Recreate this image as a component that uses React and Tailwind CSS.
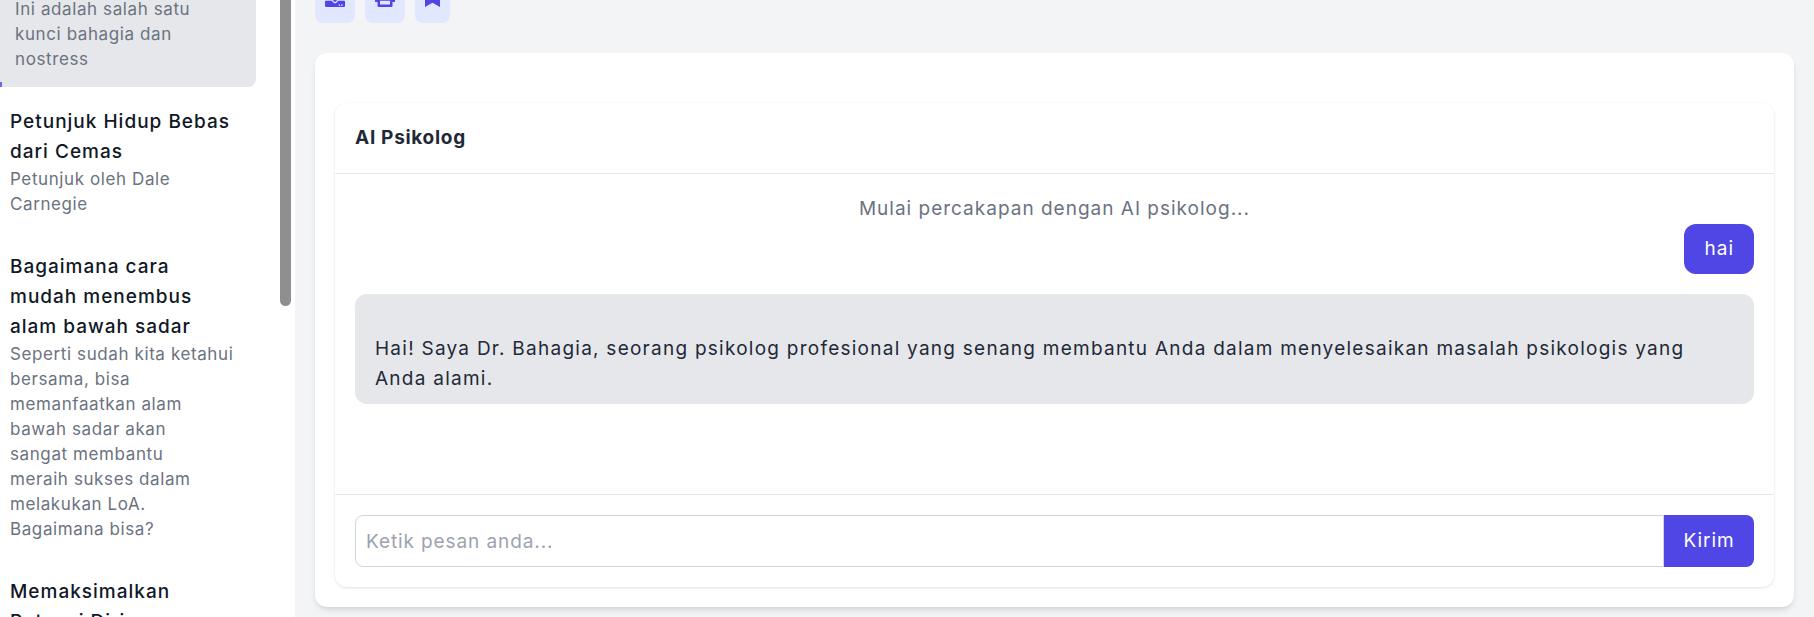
import React from "react";
import { FaDownload, FaPrint, FaBookmark } from "react-icons/fa";

const articles = [
  {
    title: "Petunjuk Hidup Bebas dari Cemas",
    desc: "Petunjuk oleh Dale Carnegie",
  },
  {
    title: "Bagaimana cara mudah menembus alam bawah sadar",
    desc: "Seperti sudah kita ketahui bersama, bisa memanfaatkan alam bawah sadar akan\nsangat membantu\nmeraih sukses dalam\nmelakukan LoA. Bagaimana bisa?",
  },
  {
    title: "Memaksimalkan Potensi Diri",
    desc: "",
  },
];

const App = () => {
  return (
    <div className="flex h-[617px] overflow-hidden bg-[#f3f4f6] [font-family:Inter,sans-serif]">
      {/* Sidebar */}
      <aside className="flex h-full w-[295px] shrink-0 justify-between overflow-hidden bg-white">
        <div className="-mt-[3px] w-[256px] shrink-0">
          <div className="relative rounded-br-lg bg-[#e5e7eb] pb-[15px] pl-[15px] pr-4 text-[17px] leading-[25px] tracking-[0.6px] text-[#6b7280]">
            Ini adalah salah satu kunci bahagia dan nostress
            <span className="absolute bottom-0 left-0 h-[5px] w-[2px] bg-[#6d63f0]" />
          </div>
          {articles.map((item) => (
            <div key={item.title} className="pb-[15px] pl-2.5 pr-5 pt-5">
              <h3 className="text-[19px] font-medium leading-[30px] tracking-[1px] text-[#111827]">
                {item.title}
              </h3>
              {item.desc && (
                <p className="whitespace-pre-line text-[17px] leading-[25px] tracking-[0.6px] text-[#6b7280]">
                  {item.desc}
                </p>
              )}
            </div>
          ))}
        </div>
        <div className="mr-1 w-[11px] shrink-0">
          <div className="h-[306px] rounded-b-md bg-[#8f8f8f]" />
        </div>
      </aside>

      {/* Main */}
      <main className="flex h-full min-w-0 flex-1 flex-col px-5">
        <div className="-mt-[23px] flex gap-2.5">
          <button className="rounded-lg bg-[#e0e7ff] px-2.5 pb-4 pt-2.5 text-[20px] text-[#4f46e5]">
            <FaDownload />
          </button>
          <button className="rounded-lg bg-[#e0e7ff] px-2.5 pb-4 pt-2.5 text-[20px] text-[#4f46e5]">
            <FaPrint />
          </button>
          <button className="rounded-lg bg-[#e0e7ff] px-2.5 pb-4 pt-2.5 text-[20px] text-[#4f46e5]">
            <FaBookmark className="h-5 w-[15px]" />
          </button>
        </div>

        <section className="mt-[30px] rounded-xl bg-white px-5 pb-5 pt-[50px] shadow-md">
          <div className="rounded-xl bg-white shadow-[0_1px_3px_rgba(0,0,0,0.12)]">
            <div className="flex h-[71px] items-center border-b border-[#e5e7eb] px-5">
              <h2 className="text-[19px] font-bold tracking-[0.7px] text-[#1f2937]">AI Psikolog</h2>
            </div>

            <div className="h-[320px] p-5 text-[19px] leading-[30px] tracking-[1px]">
              <p className="text-center text-[#6b7280]">Mulai percakapan dengan AI psikolog...</p>
              <div className="flex justify-end">
                <div className="rounded-xl bg-[#4f46e5] px-5 py-2.5 text-white">hai</div>
              </div>
              <div className="mt-5 rounded-xl bg-[#e5e7eb] px-5 py-2.5 tracking-[1.25px] text-[#1f2937]">
                <br />
                Hai! Saya Dr. Bahagia, seorang psikolog profesional yang senang membantu Anda dalam menyelesaikan
                masalah psikologis yang Anda alami.
              </div>
            </div>

            <div className="flex border-t border-[#e5e7eb] p-5 text-[19px] tracking-[0.9px]">
              <input
                placeholder="Ketik pesan anda..."
                className="h-[52px] min-w-0 flex-1 rounded-l-lg border border-[#d1d5db] px-2.5 outline-none placeholder:text-[#9ca3af]"
              />
              <button className="h-[52px] w-[90px] rounded-r-lg bg-[#4f46e5] text-white">Kirim</button>
            </div>
          </div>
        </section>
      </main>
    </div>
  );
};

export default App;
